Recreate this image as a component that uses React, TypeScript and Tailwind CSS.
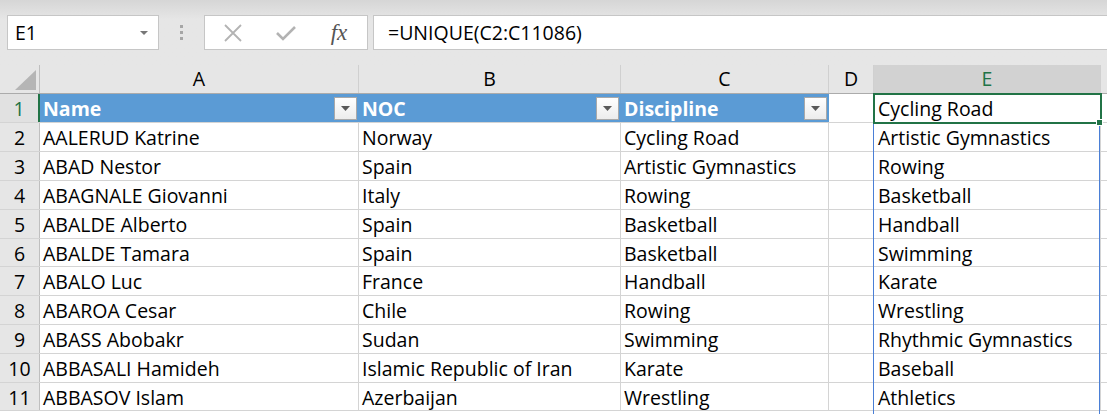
import React from "react";

const rows: string[][] = [
  ["AALERUD Katrine", "Norway", "Cycling Road", "Artistic Gymnastics"],
  ["ABAD Nestor", "Spain", "Artistic Gymnastics", "Rowing"],
  ["ABAGNALE Giovanni", "Italy", "Rowing", "Basketball"],
  ["ABALDE Alberto", "Spain", "Basketball", "Handball"],
  ["ABALDE Tamara", "Spain", "Basketball", "Swimming"],
  ["ABALO Luc", "France", "Handball", "Karate"],
  ["ABAROA Cesar", "Chile", "Rowing", "Wrestling"],
  ["ABASS Abobakr", "Sudan", "Swimming", "Rhythmic Gymnastics"],
  ["ABBASALI Hamideh", "Islamic Republic of Iran", "Karate", "Baseball"],
  ["ABBASOV Islam", "Azerbaijan", "Wrestling", "Athletics"],
];

const heights = ["h-[29px]", "h-[29px]", "h-[29px]", "h-[29px]", "h-[28px]", "h-[29px]", "h-[29px]", "h-[29px]", "h-[29px]", "h-[28px]"];

function FilterBtn() {
  return (
    <div className="absolute right-[2px] top-[3px] w-[23px] h-[23px] border border-[#a9a9a9] bg-gradient-to-b from-white to-[#ececec] flex items-center justify-center">
      <svg width="9" height="5" viewBox="0 0 9 5">
        <polygon points="0,0 9,0 4.5,5" fill="#595959" />
      </svg>
    </div>
  );
}

export default function App() {
  const font = { fontFamily: '"Open Sans", sans-serif' } as React.CSSProperties;
  return (
    <div className="w-[1107px] h-[414px] overflow-hidden bg-white text-black" style={font}>
      {/* toolbar */}
      <div className="h-[65px] bg-gradient-to-b from-[#d6d6d6] via-[#e6e6e6] via-30% to-[#e6e6e6] flex items-start pt-[15px]">
        <div className="ml-[7px] w-[152px] h-[35px] bg-white border border-[#c6c6c6] flex items-center justify-between pl-[7px] pr-[10px]">
          <span className="text-[19.5px] leading-none">E1</span>
          <svg width="8" height="4" viewBox="0 0 8 4">
            <polygon points="0,0 8,0 4,4" fill="#777" />
          </svg>
        </div>
        <div className="w-[45px] h-[35px] flex flex-col items-center justify-center gap-[3px]">
          <div className="w-[3px] h-[3px] bg-[#a6a6a6]" />
          <div className="w-[3px] h-[3px] bg-[#a6a6a6]" />
          <div className="w-[3px] h-[3px] bg-[#a6a6a6]" />
        </div>
        <div className="w-[164px] h-[35px] bg-white border border-[#c6c6c6] flex items-center">
          <div className="w-[55px] flex justify-center">
            <svg width="18" height="18" viewBox="0 0 18 18">
              <path d="M1 1 L17 17 M17 1 L1 17" stroke="#b3b3b3" strokeWidth="1.8" fill="none" />
            </svg>
          </div>
          <div className="w-[55px] flex justify-center pr-[3px]">
            <svg width="20" height="16" viewBox="0 0 20 16">
              <path d="M1 8 L7 14 L19 2" stroke="#b3b3b3" strokeWidth="2.6" fill="none" />
            </svg>
          </div>
          <div className="flex-1 flex justify-center pr-[4px]">
            <span className="text-[23px] italic leading-none text-[#555]" style={{ fontFamily: '"Liberation Serif", serif' }}>
              fx
            </span>
          </div>
        </div>
        <div className="ml-[5px] flex-1 h-[35px] bg-white border border-[#c6c6c6] border-r-0 flex items-center pl-[14px]">
          <span className="text-[19.5px] leading-none">=UNIQUE(C2:C11086)</span>
        </div>
      </div>

      {/* grid */}
      <div className="relative">
        {/* column headers */}
        <div className="flex h-[29px] bg-[#e6e6e6] border-b border-[#ababab] text-[19.5px]">
          <div className="w-[40px] shrink-0 border-r border-[#bfbfbf] relative">
            <svg className="absolute left-[15px] top-[5px]" width="22" height="21" viewBox="0 0 22 21">
              <polygon points="21,0 21,20 0,20" fill="#b5b5b5" />
            </svg>
          </div>
          <div className="w-[319px] shrink-0 border-r border-[#d0d0d0] flex items-center justify-center">A</div>
          <div className="w-[262px] shrink-0 border-r border-[#d0d0d0] flex items-center justify-center">B</div>
          <div className="w-[208px] shrink-0 border-r border-[#d0d0d0] flex items-center justify-center">C</div>
          <div className="w-[45px] shrink-0 border-r border-[#d0d0d0] flex items-center justify-center">D</div>
          <div className="w-[227px] shrink-0 border-r border-[#d0d0d0] bg-[#d2d2d2] text-[#217346] flex items-center justify-center">E</div>
          <div className="flex-1" />
        </div>

        {/* row 1 */}
        <div className="flex h-[29px] border-b border-[#d4d4d4] text-[19.5px]">
          <div className="w-[40px] shrink-0 bg-[#e1e1e1] border-r-2 border-[#217346] text-[#217346] flex items-center justify-center pt-[2px]">1</div>
          <div className="w-[319px] shrink-0 bg-[#5b9bd5] text-white font-bold flex items-center pl-[3px] pt-[2px] relative">
            Name
            <FilterBtn />
          </div>
          <div className="w-[262px] shrink-0 bg-[#5b9bd5] text-white font-bold flex items-center pl-[3px] pt-[2px] relative">
            NOC
            <FilterBtn />
          </div>
          <div className="w-[208px] shrink-0 bg-[#5b9bd5] text-white font-bold flex items-center pl-[3px] pt-[2px] relative">
            Discipline
            <FilterBtn />
          </div>
          <div className="w-[45px] shrink-0 border-r border-[#d4d4d4]" />
          <div className="w-[227px] shrink-0 border-r border-[#d4d4d4] flex items-center pl-[4px] pt-[2px]">Cycling Road</div>
          <div className="flex-1" />
        </div>

        {rows.map((r, i) => (
          <div key={i} className={`flex ${heights[i]} border-b border-[#d4d4d4] text-[19.5px]`}>
            <div className="w-[40px] shrink-0 bg-[#e6e6e6] border-r border-[#bfbfbf] flex items-center justify-center pt-[2px]">{i + 2}</div>
            <div className="w-[319px] shrink-0 border-r border-[#d4d4d4] flex items-center pl-[3px] pt-[2px] whitespace-nowrap">{r[0]}</div>
            <div className="w-[262px] shrink-0 border-r border-[#d4d4d4] flex items-center pl-[3px] pt-[2px] whitespace-nowrap">{r[1]}</div>
            <div className="w-[208px] shrink-0 border-r border-[#d4d4d4] flex items-center pl-[3px] pt-[2px] whitespace-nowrap">{r[2]}</div>
            <div className="w-[45px] shrink-0 border-r border-[#d4d4d4]" />
            <div className="w-[227px] shrink-0 border-r border-[#d4d4d4] flex items-center pl-[4px] pt-[2px] whitespace-nowrap">{r[3]}</div>
            <div className="flex-1" />
          </div>
        ))}

        {/* selection overlay E1 */}
        <div className="absolute left-[873px] top-[28px] w-[229px] h-[31px] border-2 border-[#217346] pointer-events-none" />
        <div className="absolute left-[1096px] top-[54px] w-[7px] h-[7px] bg-[#217346] border border-white" />
        {/* spill range border */}
        <div className="absolute left-[873px] top-[59px] w-[1px] h-[300px] bg-[#4a7fd6]" />
        <div className="absolute left-[1099px] top-[61px] w-[1px] h-[300px] bg-[#4a7fd6]" />
      </div>
    </div>
  );
}
